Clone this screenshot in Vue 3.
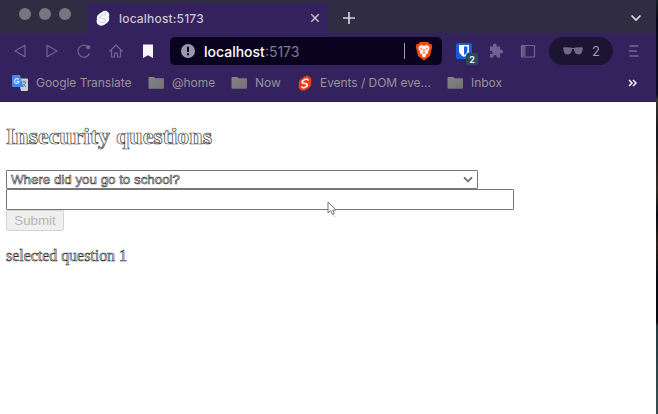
<script setup>
import { ref } from 'vue'

const bookmarks = [
  { icon: 'translate', label: 'Google Translate', slot: 136, text: 95 },
  { icon: 'folder', label: '@home', slot: 83, text: 42 },
  { icon: 'folder', label: 'Now', slot: 67, text: 26 },
  { icon: 'svelte', label: 'Events / DOM eve…', slot: 149, text: 111 },
  { icon: 'folder', label: 'Inbox', slot: 60, text: 31 },
]
const answer = ref('')
</script>

<template>
  <div class="screen">
    <div class="browser">
      <header class="tabs">
        <div class="lights"><i></i><i></i><i></i></div>
        <div class="tab">
          <svg class="logo" width="14" height="16" viewBox="0 0 14 16">
            <path d="M6 2 Q9-.5 12 2 Q14 4 13 7 Q14 11 11 13 L8 15 Q4 17 1.5 14 Q0 12 1 9 Q0 6 3 4Z" fill="#f6f5f8" />
            <path d="M10.3 5.6 Q9 3.400 7 4.500 L4.800 5.900 Q3.300 7.200 5 8.200 L8.600 8.900 Q10.200 10 8.500 11.400 L6.500 12.500 Q4.500 13.200 3.600 11.300" fill="none" stroke="#c8c4d0" stroke-width=".8" />
          </svg>
          <span class="tab-title">localhost:5173</span>
          <svg width="10" height="10" viewBox="0 0 10 10"><path d="M1.3 1.3l7.4 7.4M8.7 1.3L1.3 8.7" stroke="#c9c4d6" stroke-width="1.4" /></svg>
        </div>
        <svg class="plus" width="14" height="14" viewBox="0 0 14 14"><path d="M7 1v12M1 7h12" stroke="#d2d1d7" stroke-width="1.7" /></svg>
        <svg class="chevron" width="12" height="8" viewBox="0 0 12 8"><path d="M1.5 1.5L6 6l4.5-4.5" fill="none" stroke="#dddce2" stroke-width="1.7" /></svg>
      </header>

      <nav class="toolbar">
        <div class="tool"><svg width="16" height="16" viewBox="0 0 16 16"><path d="M13 2.2v11.6L3 8Z" class="line" /></svg></div>
        <div class="tool"><svg width="16" height="16" viewBox="0 0 16 16"><path d="M3 2.2v11.6L13 8Z" class="line" /></svg></div>
        <div class="tool">
          <svg width="16" height="16" viewBox="0 0 16 16"><path d="M11.8 3.6A6 6 0 1 0 13.5 10.5" class="line" /><circle cx="12.2" cy="4.3" r="2" fill="#73658f" /></svg>
        </div>
        <div class="tool"><svg width="16" height="16" viewBox="0 0 16 16"><path d="M1.5 8.5L8 2l6.5 6.5M3.5 7v7h3v-4h3v4h3V7" class="line" /></svg></div>
        <div class="tool"><svg width="12" height="15" viewBox="0 0 12 15"><path d="M1 .5h10v13.500l-5-2.700L1 14Z" fill="#f7f6f9" /></svg></div>
        <div class="address">
          <svg width="14" height="14" viewBox="0 0 14 14"><circle cx="7" cy="7" r="7" fill="#9997a9" /><path d="M7 2.8v5.1M7 9.2v2" stroke="#0b0524" stroke-width="2" /></svg>
          <span class="url"><b>localhost</b>:5173</span>
          <i class="divider"></i>
          <svg class="lion" width="18" height="20" viewBox="0 0 18 20">
            <path d="M5 1h8l1.5 2L16.5 3l.7 3.2-.6 2.1L15 15l-6 4.5L3 15 1.4 8.3.8 6.2 1.5 3l2-.1Z" fill="#f04b16" />
            <path d="M5.3 4L9 4.8 12.7 4l2 3-1.8 3.7.2 1.9-2.4 1 .4 1.4L9 16.5 6.9 15l.4-1.4-2.4-1 .2-1.9L3.3 7Z" fill="#fff4ec" />
            <path d="M5.4 7.500l2 .8M12.600 7.500l-2 .8M9 8v3M7.500 11.600L9 12.400l1.500-.8" fill="none" stroke="#f04b16" stroke-width=".9" />
          </svg>
        </div>
        <div class="vault">
          <svg width="16" height="16" viewBox="0 0 16 16"><rect width="16" height="16" rx="2" fill="#175ddc" /><path d="M3 2h10v6.2Q12.5 11.5 8 14 3.5 11.5 3 8.2Z" fill="#fff" /><path d="M8 3.6h3.4V8Q11 10.5 8 12.2Z" fill="#175ddc" /></svg>
          <span class="badge">2</span>
        </div>
        <div class="tool">
          <svg width="16" height="16" viewBox="0 0 16 16"><path d="M2 3.5h3.1C4.5 1.7 5.4.6 6.8.6s2.3 1.1 1.7 2.9h3.6v3.3c1.8-.6 3 .3 3 1.7s-1.2 2.3-3 1.7v4.4H8.7c.4-1.7-.3-2.6-1.6-2.6s-2 .9-1.6 2.600H2v-3.7c1.8.3 2.6-.4 2.6-1.5S3.8 7.600 2 8Z" fill="#6f6290" /></svg>
        </div>
        <div class="tool"><svg width="16" height="14" viewBox="0 0 16 14"><rect x="1.5" y="1.500" width="13" height="11.500" class="line" /><path d="M2 2h3.500v10.500H2Z" fill="#675784" /></svg></div>
        <div class="private">
          <svg width="20" height="8" viewBox="0 0 20 8"><path d="M0 .5Q5-.2 10 .9 15-.2 20 .5L19.200 4.500Q18.500 7.500 15.500 7.500T11.400 4.300L10.700 2H9.300L8.600 4.300Q7.500 7.500 4.500 7.500T.8 4.500Z" fill="#716987" /></svg>
          <span>2</span>
        </div>
        <svg class="menu" width="10" height="12" viewBox="0 0 10 12"><path d="M.5 1h9M0 6h8M.5 11h9" stroke="#74678f" stroke-width="1.3" /></svg>
      </nav>

      <div class="bookmarks">
        <div v-for="b in bookmarks" :key="b.label" class="bookmark" :style="{ width: b.slot + 'px' }">
          <svg v-if="b.icon === 'folder'" width="16" height="16" viewBox="0 0 16 16">
            <defs><linearGradient id="folder" x2="1" y2="1"><stop stop-color="#858587" /><stop offset="1" stop-color="#727274" /></linearGradient></defs>
            <path d="M.5 3q0-1 1-1H6l1.300 1.200H15q1 0 1 1v8.800q0 .8-1 .8H1.500q-1 0-1-1Z" fill="url(#folder)" />
          </svg>
          <svg v-else-if="b.icon === 'translate'" width="16" height="16" viewBox="0 0 16 16">
            <path d="M6 3.500h9q1 0 1 1V15q0 1-1 1H9Z" fill="#c9ced7" />
            <path d="M1 0h7l3.300 12H1q-1 0-1-1V1q0-1 1-1Z" fill="#4487ed" />
            <path d="M6.800 4.600A2.400 2.400 0 1 0 7 7.100V6.300H4.700" fill="none" stroke="#dbe8ff" stroke-width="1.200" />
            <path d="M9.500 7h5M12 5.500V7M13.500 7.500q-.8 3-3 4.500M11 9l3 3" fill="none" stroke="#667482" stroke-width=".9" />
          </svg>
          <svg v-else width="14" height="16" viewBox="0 0 14 16">
            <path d="M6 2 Q9-.5 12 2 Q14 4 13 7 Q14 11 11 13 L8 15 Q4 17 1.500 14 Q0 12 1 9 Q0 6 3 4Z" fill="#f23c12" />
            <path d="M10.300 5.500 Q9 3.200 7 4.400 L4.800 5.900 Q3.300 7.300 5.200 8.200 L8.500 8.800 Q10.200 9.900 8.500 11.400 L6.600 12.500 Q4.500 13.300 3.600 11.300" fill="none" stroke="#fff" stroke-width="1.600" />
          </svg>
          <span :style="{ width: b.text + 'px' }">{{ b.label }}</span>
        </div>
        <svg class="more" width="9" height="8" viewBox="0 0 9 8"><path d="M1 1l3 3-3 3M5 1l3 3-3 3" fill="none" stroke="#f4f2f8" stroke-width="1.500" /></svg>
      </div>

      <main class="page">
        <h2>Insecurity questions</h2>
        <form @submit.prevent>
          <div class="select">
            <span>Where did you go to school?</span>
            <svg width="10" height="7" viewBox="0 0 10 7"><path d="M1 1.300l4 4 4-4" fill="none" stroke="#444" stroke-width="1.800" /><path d="M1 1.300l4 4 4-4" fill="none" stroke="#fff" stroke-width=".5" /></svg>
          </div>
          <input v-model="answer" />
          <button disabled>Submit</button>
        </form>
        <p>selected question 1</p>
      </main>
      <svg class="cursor" width="11" height="17" viewBox="0 0 11 17">
        <path d="M5 12l2 4 2-1" fill="none" stroke="#ddd" />
        <path d="M1 1v11l2.700-2.300L5.500 13.500l1.800-.8L5.700 9H9Z" fill="#fff" stroke="#666" stroke-width=".9" />
      </svg>
    </div>
    <div class="backdrop"></div>
  </div>
</template>

<style>
body { background: #fff; overflow: hidden; }
</style>

<style scoped>
* { box-sizing: border-box; }
svg { display: block; flex: none; }
.screen { display: flex; width: 658px; height: 414px; font-family: Inter, "Liberation Sans", sans-serif; }
.browser { position: relative; width: 656px; background: #fff; }
.backdrop { width: 2px; background: linear-gradient(#142023 0, #080718 20px, #100b29 95px, #37362f 100px, #15181c 130px, #302d25 190px, #070b12 215px, #29231a 245px, #080c12 280px, #080c12 322px, #223a40 326px, #354c50 400px); }
.tabs { display: flex; align-items: center; height: 33px; background: #302c42; }
.lights { display: flex; gap: 8px; width: 88px; padding-left: 19px; align-self: flex-start; padding-top: 8px; }
.lights i { width: 12px; height: 12px; border-radius: 50%; background: #777580; }
.tab { display: flex; align-items: center; align-self: flex-end; width: 240px; height: 30px; padding: 0 8px 0 8px; background: #34225f; }
.tab-title { flex: 1; margin-left: 9px; font-size: 12px; font-weight: 500; color: #cbc6d7; letter-spacing: .18px; }
.plus { margin: 3px 0 0 14px; }
.chevron { margin: 3px 14px 0 auto; }
.toolbar { display: flex; align-items: center; height: 36px; padding-left: 4px; background: #34225f; }
.tool { display: grid; place-items: center; flex: none; width: 32px; height: 32px; }
.line { fill: none; stroke: #73658f; stroke-width: 1.200; stroke-linejoin: round; }
.address { display: flex; align-items: center; width: 272px; height: 28px; margin-left: 6px; padding: 0 9px 0 11px; border-radius: 5px; background: #090320; }
.url { margin-left: 9px; color: #81798f; font-size: 14px; letter-spacing: 0; white-space: nowrap; }
.url b { color: #fff; font-weight: 500; }
.divider { width: 1px; height: 16px; margin-left: auto; background: #a49bad; }
.lion { margin-left: 10px; }
.vault { position: relative; width: 38px; padding-left: 14px; }
.badge { position: absolute; left: 24px; top: 10px; display: grid; place-items: center; width: 12px; height: 12px; border-radius: 2px; background: #294b5d; color: #fff; font-size: 9px; font-weight: 600; }
.private { display: flex; align-items: center; gap: 9px; width: 64px; height: 28px; margin-left: 5px; padding-left: 14px; border-radius: 14px; background: #1c1433; color: #a29aae; font-size: 13px; }
.menu { margin-left: 16px; }
.bookmarks { display: flex; align-items: center; height: 33px; padding: 0 0 5px 12px; background: #34225f; border-bottom: 1px solid #2c1b51; }
.bookmark { display: flex; align-items: center; gap: 8px; font-size: 12px; letter-spacing: -.05px; color: #989299; white-space: nowrap; }
.more { margin-left: auto; margin-right: 19px; }
.page { padding: 21px 6px 0; font-family: "Liberation Serif", serif; color: #fff; }
h2 { margin: 0; font-size: 24px; line-height: 27px; font-weight: 700; -webkit-text-stroke: .7px #333; }
form { display: flex; flex-direction: column; align-items: flex-start; margin-top: 20px; font-family: "Liberation Sans", sans-serif; }
.select { display: flex; align-items: center; justify-content: space-between; width: 472px; height: 19px; padding: 0 4px; border: 1px solid #767676; border-radius: 1px; font-size: 13.333px; color: #fff; -webkit-text-stroke: .55px #222; }
input { width: 508px; height: 21px; padding: 1px 2px; border: 1px solid #767676; border-radius: 1px; outline: 0; }
button { width: 58px; height: 21px; padding: 0; border: 1px solid #d3d3d3; border-radius: 2px; background: #efefef; color: #b5b5b5; font: 13.333px "Liberation Sans", sans-serif; }
p { margin: 16px 0 0; font-size: 16px; line-height: 18px; color: #fff; -webkit-text-stroke: .55px #222; letter-spacing: -.04px; }
.cursor { position: absolute; left: 327px; top: 201px; }
</style>
